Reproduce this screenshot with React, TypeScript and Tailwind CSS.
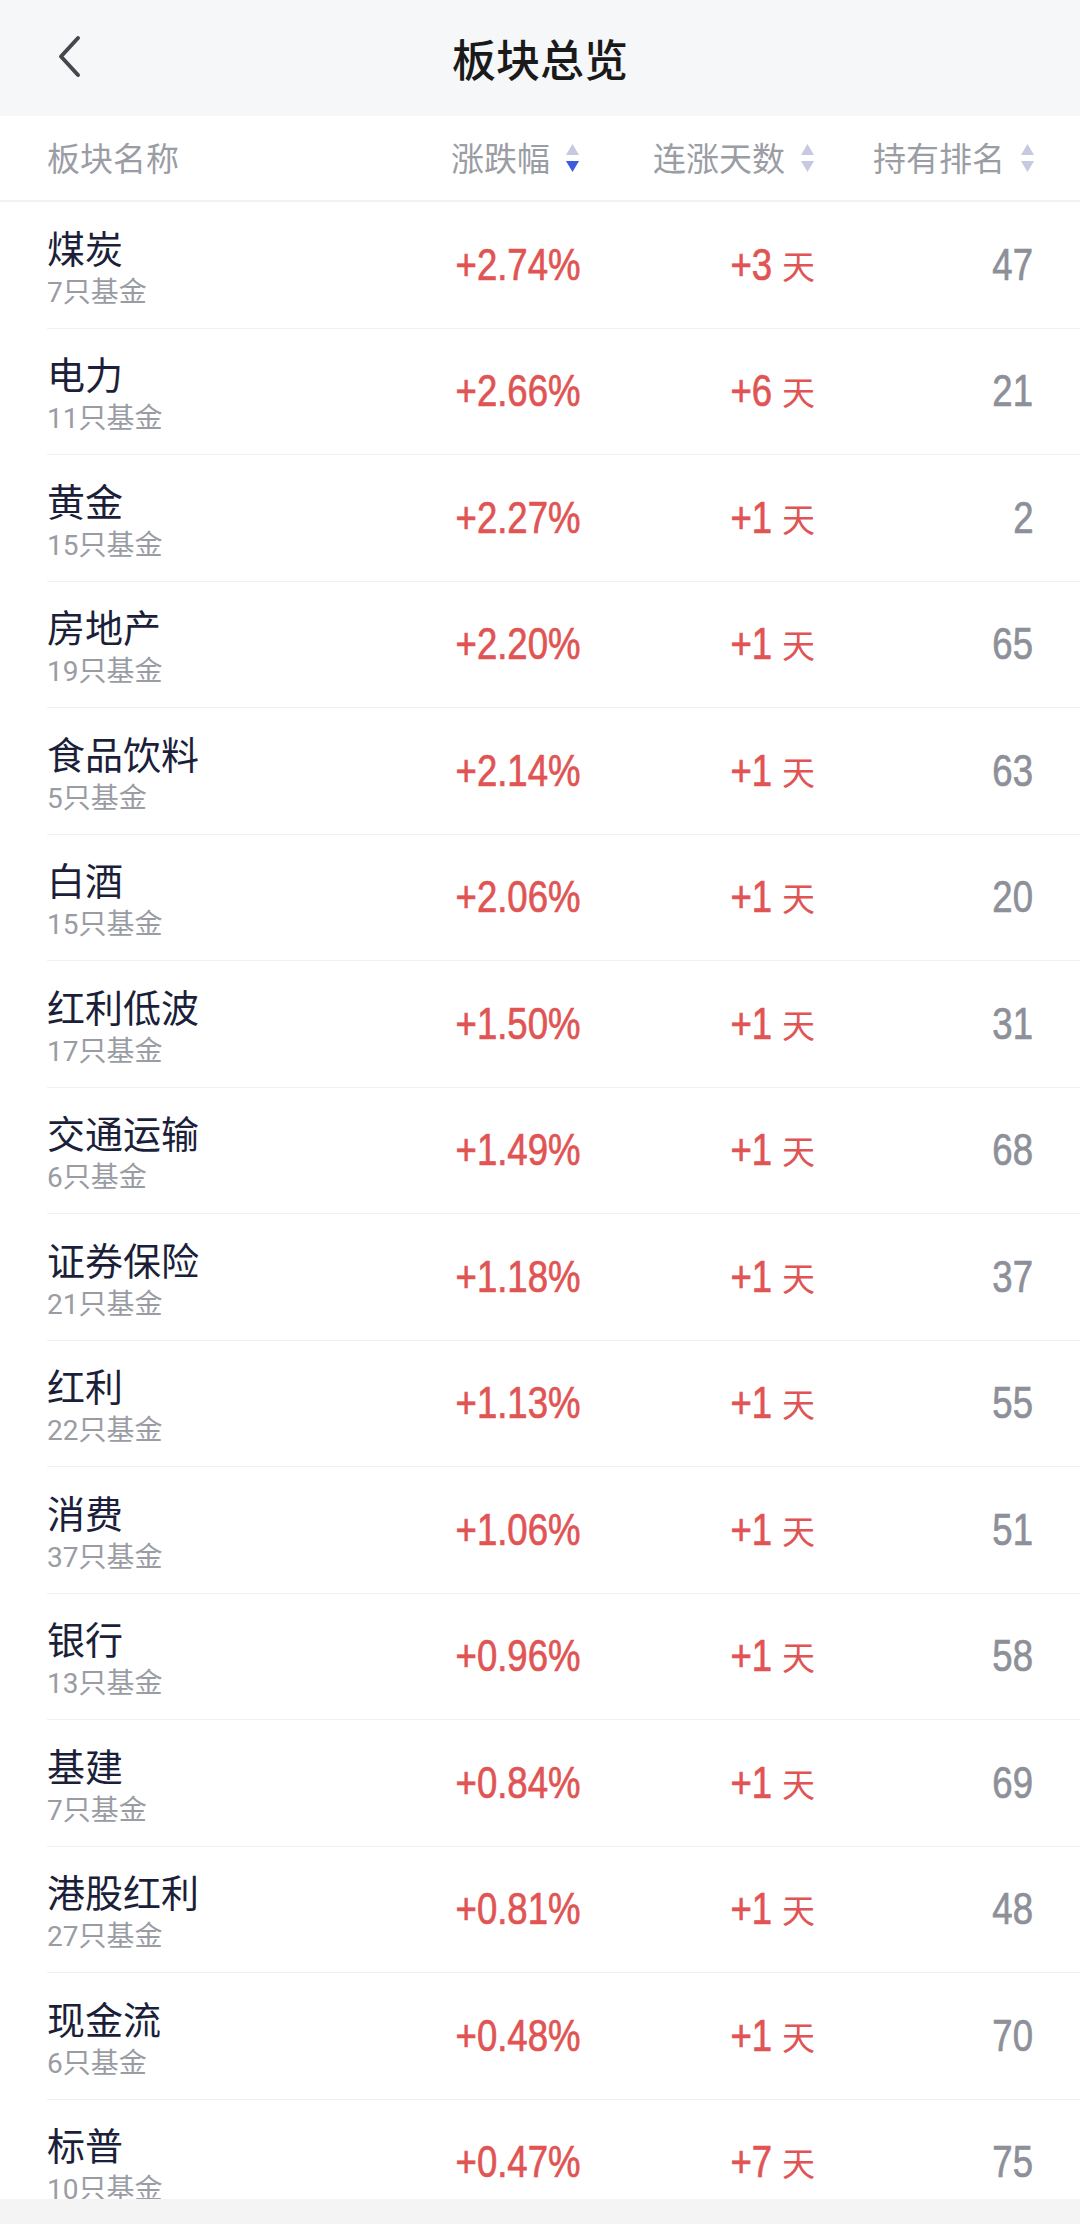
import React from "react";

type Bankuai = {
  mingcheng: string;
  jijinShu: number;
  zhangdie: string;
  lianzhang: number;
  paiming: number;
};

const bankuaiList: Bankuai[] = [
  { mingcheng: "煤炭", jijinShu: 7, zhangdie: "+2.74%", lianzhang: 3, paiming: 47 },
  { mingcheng: "电力", jijinShu: 11, zhangdie: "+2.66%", lianzhang: 6, paiming: 21 },
  { mingcheng: "黄金", jijinShu: 15, zhangdie: "+2.27%", lianzhang: 1, paiming: 2 },
  { mingcheng: "房地产", jijinShu: 19, zhangdie: "+2.20%", lianzhang: 1, paiming: 65 },
  { mingcheng: "食品饮料", jijinShu: 5, zhangdie: "+2.14%", lianzhang: 1, paiming: 63 },
  { mingcheng: "白酒", jijinShu: 15, zhangdie: "+2.06%", lianzhang: 1, paiming: 20 },
  { mingcheng: "红利低波", jijinShu: 17, zhangdie: "+1.50%", lianzhang: 1, paiming: 31 },
  { mingcheng: "交通运输", jijinShu: 6, zhangdie: "+1.49%", lianzhang: 1, paiming: 68 },
  { mingcheng: "证券保险", jijinShu: 21, zhangdie: "+1.18%", lianzhang: 1, paiming: 37 },
  { mingcheng: "红利", jijinShu: 22, zhangdie: "+1.13%", lianzhang: 1, paiming: 55 },
  { mingcheng: "消费", jijinShu: 37, zhangdie: "+1.06%", lianzhang: 1, paiming: 51 },
  { mingcheng: "银行", jijinShu: 13, zhangdie: "+0.96%", lianzhang: 1, paiming: 58 },
  { mingcheng: "基建", jijinShu: 7, zhangdie: "+0.84%", lianzhang: 1, paiming: 69 },
  { mingcheng: "港股红利", jijinShu: 27, zhangdie: "+0.81%", lianzhang: 1, paiming: 48 },
  { mingcheng: "现金流", jijinShu: 6, zhangdie: "+0.48%", lianzhang: 1, paiming: 70 },
  { mingcheng: "标普", jijinShu: 10, zhangdie: "+0.47%", lianzhang: 7, paiming: 75 },
];

const cjk = "font-['Noto_Sans_CJK_SC','Noto_Sans',sans-serif]";
// condensed, medium-weight look of the figures: Liberation Sans squeezed + thin stroke
const num =
  "inline-block origin-right scale-x-[0.83] font-['Liberation_Sans',sans-serif] text-[44px] leading-[50px] [-webkit-text-stroke:0.7px_currentColor]";

function SiralamaIkon({ asagiAktif = false }: { asagiAktif?: boolean }) {
  return (
    <svg width="15" height="28" viewBox="0 0 15 28" className="ml-[15px] shrink-0">
      <polygon points="1,11 7.5,0 14,11" fill="#c6c9df" />
      <polygon points="1,17 14,17 7.5,28" fill={asagiAktif ? "#3d5bdc" : "#c6c9df"} />
    </svg>
  );
}

function Satir({ b }: { b: Bankuai }) {
  return (
    <div className="flex h-[126.5px] shrink-0 items-center border-b border-[#f1f1f3] ml-[47px] pr-[45px]">
      <div className="flex flex-1 flex-col pt-[5px]">
        <span className={`${cjk} text-[38px] leading-[44px] text-[#1b1f3a]`}>{b.mingcheng}</span>
        <span className="mt-[4px] text-[28px] leading-[34px] text-[#9a9ca4]">
          <span className="font-['Roboto',sans-serif]">{b.jijinShu}</span>
          <span className={cjk}>只基金</span>
        </span>
      </div>
      <div className="flex w-[236px] justify-end text-[#e05454]">
        <span className={num}>{b.zhangdie}</span>
      </div>
      <div className="flex w-[235px] items-center justify-end text-[#e05454]">
        <span className={num}>+{b.lianzhang}</span>
        <span className={`${cjk} ml-[10px] text-[33px] leading-[50px]`}>天</span>
      </div>
      <div className="flex w-[220px] justify-end pr-[2px] text-[#8d9099]">
        <span className={num}>{b.paiming}</span>
      </div>
    </div>
  );
}

export default function App() {
  return (
    <div className={`flex h-[2224px] w-[1080px] flex-col overflow-hidden bg-white ${cjk}`}>
      <header className="relative flex h-[116px] shrink-0 items-center justify-center bg-[#f6f7f9]">
        <svg width="30" height="44" viewBox="0 0 30 44" className="absolute left-[54px] top-[35px]">
          <path d="M24 3 L7 21.5 L24 40" fill="none" stroke="#45474d" strokeWidth="4" strokeLinecap="round" strokeLinejoin="round" />
        </svg>
        <h1 className="text-[44px] font-medium leading-none text-[#1a1a1a]">板块总览</h1>
      </header>

      <div className="flex h-[86px] shrink-0 items-center border-b-2 border-[#f2f2f4] pl-[47px] pr-[45px] text-[33px] text-[#9b9da5]">
        <div className="flex-1">板块名称</div>
        <div className="flex w-[236px] items-center justify-end">
          涨跌幅
          <SiralamaIkon asagiAktif />
        </div>
        <div className="flex w-[235px] items-center justify-end">
          连涨天数
          <SiralamaIkon />
        </div>
        <div className="flex w-[220px] items-center justify-end">
          持有排名
          <SiralamaIkon />
        </div>
      </div>

      <div className="flex flex-1 flex-col overflow-hidden">
        {bankuaiList.map((b) => (
          <Satir key={b.mingcheng} b={b} />
        ))}
      </div>

      <div className="h-[25px] shrink-0 bg-[#f4f4f5]" />
    </div>
  );
}
